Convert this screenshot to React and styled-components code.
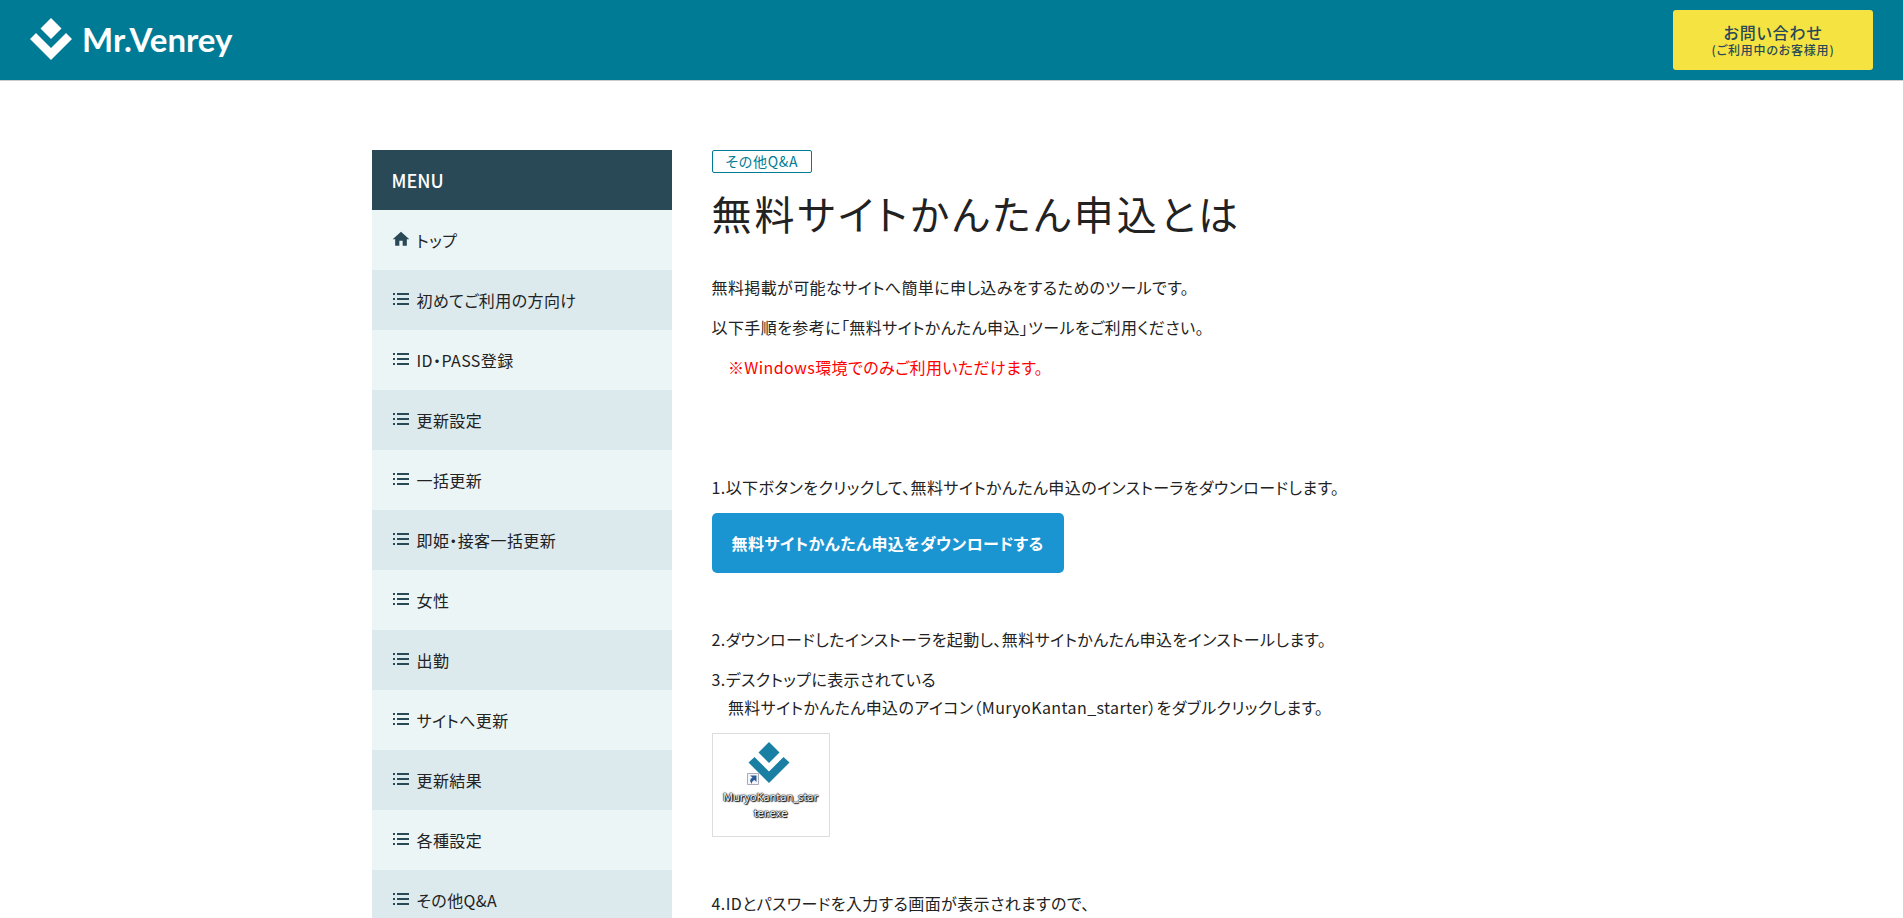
import React from 'react';
import styled, { createGlobalStyle } from 'styled-components';

const GlobalStyle = createGlobalStyle`
  *, *::before, *::after {
    box-sizing: border-box;
  }

  body {
    margin: 0;
    background: #fff;
    color: #222;
    font-family: 'Noto Sans CJK JP', sans-serif;
    font-size: 16px;
    line-height: 28px;
    letter-spacing: 0.025em;
    font-feature-settings: 'palt';
  }

  a {
    color: inherit;
    text-decoration: none;
  }
`;

const Header = styled.header`
  display: flex;
  align-items: center;
  justify-content: space-between;
  height: 81px;
  padding: 0 30px;
  background: #007b95;
  border-bottom: 1px solid #ccc;
`;

const Logo = styled.a`
  display: flex;
  align-items: center;
  gap: 10px;
  padding-bottom: 2px;
  color: #fff;
  font-family: Lato, sans-serif;
  font-size: 33px;
  font-weight: 700;
  line-height: 40px;
  letter-spacing: normal;
`;

const ContactLink = styled.a`
  display: flex;
  flex-direction: column;
  align-items: center;
  justify-content: center;
  width: 200px;
  height: 60px;
  padding-top: 2px;
  border-radius: 3px;
  background: #f5e342;
  color: #294956;
  font-weight: 500;
  line-height: 18px;
  letter-spacing: 0.05em;
`;

const ContactNote = styled.small`
  font-size: 12px;
  line-height: 18px;
`;

const Container = styled.div`
  display: flex;
  align-items: flex-start;
  gap: 40px;
  max-width: 1160px;
  margin: 0 auto;
  padding-top: 69px;
`;

const Sidebar = styled.nav`
  flex: 0 0 300px;
`;

const MenuTitle = styled.h2`
  margin: 0;
  padding: 0 20px;
  background: #294956;
  color: #fff;
  font-size: 18px;
  font-weight: 500;
  line-height: 60px;
  letter-spacing: normal;
`;

const MenuList = styled.ul`
  margin: 0;
  padding: 0;
  list-style: none;
`;

const MenuItem = styled.li`
  background: #ecf5f6;

  &:nth-child(even) {
    background: #dce9ed;
  }
`;

const MenuLink = styled.a`
  display: flex;
  align-items: center;
  gap: 7px;
  height: 60px;
  padding: 0 20px;

  svg {
    flex: none;
    margin-bottom: 2px;
    fill: #294956;
  }
`;

const Main = styled.main`
  flex: 1;
  min-width: 0;
`;

const Category = styled.a`
  display: block;
  width: fit-content;
  padding: 0 13px;
  border: 1px solid #007b95;
  border-radius: 2px;
  color: #007b95;
  font-size: 14px;
  line-height: 21px;
  letter-spacing: 0.05em;
`;

const Title = styled.h1`
  margin: 10px 0 30px;
  font-size: 40px;
  font-weight: 400;
  line-height: 60px;
  letter-spacing: 0.075em;
`;

const Text = styled.p`
  margin: 0 0 ${({ $space }) => ($space ? `${12 + 40 * $space}px` : '12px')};
  color: ${({ $notice }) => ($notice ? '#f00' : 'inherit')};
`;

const DownloadLink = styled.a`
  display: block;
  width: fit-content;
  margin-bottom: 52px;
  padding: 16px 20px;
  border-radius: 5px;
  background: #1b95d2;
  color: #fff;
  font-weight: 700;
`;

const Shortcut = styled.figure`
  display: flex;
  flex-direction: column;
  align-items: center;
  width: 118px;
  height: 104px;
  margin: 0 0 52px;
  padding-top: 8px;
  border: 1px solid #ddd;
`;

const ShortcutName = styled.figcaption`
  margin-top: 3px;
  color: #fff;
  font-family: 'Noto Sans', sans-serif;
  font-size: 11px;
  line-height: 16px;
  letter-spacing: normal;
  text-align: center;
  text-shadow: 0 0 1px #000, 0 0 1px #000, 1px 1px 1px #000, 0 0 2px #000;
`;

const HomeIcon = () => (
  <svg width="18" height="18" viewBox="1.2 1 21.6 21.6" aria-hidden="true">
    <path d="M10 20v-6h4v6h5v-8h3L12 3 2 12h3v8z" />
  </svg>
);

const ListIcon = () => (
  <svg width="18" height="18" viewBox="0 0 18 18" aria-hidden="true">
    <path d="M1 3h2v2H1zM5 3h12v2H5zM1 8h2v2H1zM5 8h12v2H5zM1 13h2v2H1zM5 13h12v2H5z" />
  </svg>
);

const Mark = ({ size }) => (
  <svg width={size} height={size} viewBox="0 0 42 42" fill="currentColor" aria-hidden="true">
    <path d="M21 0 31.5 10.5 21 21 10.5 10.5z" />
    <path d="M6 15 21 30 36 15 42 21 21 42 0 21z" />
  </svg>
);

const ShortcutIcon = () => (
  <svg width="48" height="44" viewBox="4 1 48 44" aria-hidden="true">
    <path d="M26 1 36.5 11.5 26 22 15.5 11.5z" fill="#1a80a3" />
    <path d="M11.5 16 26 30.5 40.5 16 46.5 21.5 26 42 5.5 21.5z" fill="#1a80a3" />
    <path d="M4.5 32.5h11v11h-11z" fill="#f4f6fa" stroke="#aab" />
    <path d="M7 34.5h6.500v6.500l-2-2q-3 1-2.500 4-4-4 .500-6.500z" fill="#2c5a96" />
  </svg>
);

const menu = [
  '初めてご利用の方向け',
  'ID・PASS登録',
  '更新設定',
  '一括更新',
  '即姫・接客一括更新',
  '女性',
  '出勤',
  'サイトへ更新',
  '更新結果',
  '各種設定',
  'その他Q&A',
];

const App = () => {
  return (
    <>
      <GlobalStyle />
      <Header>
        <Logo href="#">
          <Mark size={42} />
          Mr.Venrey
        </Logo>
        <ContactLink href="#">
          お問い合わせ
          <ContactNote>(ご利用中のお客様用)</ContactNote>
        </ContactLink>
      </Header>
      <Container>
        <Sidebar>
          <MenuTitle>MENU</MenuTitle>
          <MenuList>
            <MenuItem>
              <MenuLink href="#">
                <HomeIcon />
                トップ
              </MenuLink>
            </MenuItem>
            {menu.map((label) => (
              <MenuItem key={label}>
                <MenuLink href="#">
                  <ListIcon />
                  {label}
                </MenuLink>
              </MenuItem>
            ))}
          </MenuList>
        </Sidebar>
        <Main>
          <Category href="#">その他Q&A</Category>
          <Title>無料サイトかんたん申込とは</Title>
          <Text>無料掲載が可能なサイトへ簡単に申し込みをするためのツールです。</Text>
          <Text>以下手順を参考に「無料サイトかんたん申込」ツールをご利用ください。</Text>
          <Text $notice $space={2}>
            {'　※Windows環境でのみご利用いただけます。'}
          </Text>
          <Text>
            1.以下ボタンをクリックして、無料サイトかんたん申込のインストーラをダウンロードします。
          </Text>
          <DownloadLink href="#">無料サイトかんたん申込をダウンロードする</DownloadLink>
          <Text>
            2.ダウンロードしたインストーラを起動し、無料サイトかんたん申込をインストールします。
          </Text>
          <Text>
            3.デスクトップに表示されている
            <br />
            {'　無料サイトかんたん申込のアイコン（MuryoKantan_starter）をダブルクリックします。'}
          </Text>
          <Shortcut>
            <ShortcutIcon />
            <ShortcutName>
              MuryoKantan_star
              <br />
              ter.exe
            </ShortcutName>
          </Shortcut>
          <Text>4.IDとパスワードを入力する画面が表示されますので、</Text>
        </Main>
      </Container>
    </>
  );
};

export default App;
